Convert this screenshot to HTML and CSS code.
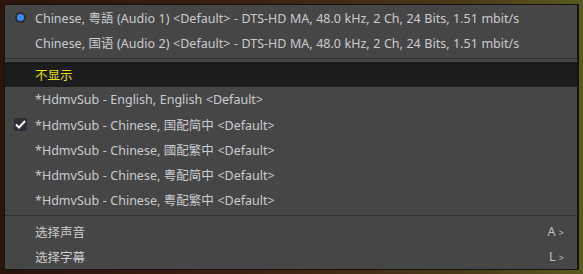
FILE: index.html
```html
<!doctype html>
<html>
  <head>
    <title>Track Menu</title>
    <link rel="stylesheet" href="styles.css">
  </head>
  <body>
    <div class="menu">
      <div class="item">
        <span class="mark"><span class="radio"></span></span>
        <span class="label">Chinese, 粤語 (Audio 1) &lt;Default&gt; - DTS-HD MA, 48.0 kHz, 2 Ch, 24 Bits, 1.51 mbit/s</span>
      </div>
      <div class="item">
        <span class="mark"></span>
        <span class="label">Chinese, 国语 (Audio 2) &lt;Default&gt; - DTS-HD MA, 48.0 kHz, 2 Ch, 24 Bits, 1.51 mbit/s</span>
      </div>
      <div class="sep"></div>
      <div class="item item_hover">
        <span class="mark"></span>
        <span class="label">不显示</span>
      </div>
      <div class="item">
        <span class="mark"></span>
        <span class="label">*HdmvSub - English, English &lt;Default&gt;</span>
      </div>
      <div class="item">
        <span class="mark">
          <span class="check">
            <svg width="11" height="9" viewBox="0 0 11 9">
              <path d="M1 4.5 L4 7.5 L10 1" fill="none" stroke="#fff" stroke-width="2"/>
            </svg>
          </span>
        </span>
        <span class="label">*HdmvSub - Chinese, 国配简中 &lt;Default&gt;</span>
      </div>
      <div class="item">
        <span class="mark"></span>
        <span class="label">*HdmvSub - Chinese, 國配繁中 &lt;Default&gt;</span>
      </div>
      <div class="item">
        <span class="mark"></span>
        <span class="label">*HdmvSub - Chinese, 粤配简中 &lt;Default&gt;</span>
      </div>
      <div class="item">
        <span class="mark"></span>
        <span class="label">*HdmvSub - Chinese, 粤配繁中 &lt;Default&gt;</span>
      </div>
      <div class="sep"></div>
      <div class="item">
        <span class="mark"></span>
        <span class="label">选择声音</span>
        <span class="key">A <small>&gt;</small></span>
      </div>
      <div class="item">
        <span class="mark"></span>
        <span class="label">选择字幕</span>
        <span class="key">L <small>&gt;</small></span>
      </div>
    </div>
  </body>
</html>
```

FILE: styles.css
```css
body {
  margin: 0;
  width: 583px;
  height: 274px;
  overflow: hidden;
  background: linear-gradient(90deg, #2a140c 0%, #3b1f12 40%, #4a3a18 80%, #5a5a20 100%);
  font-family: "Noto Sans", "Noto Sans CJK SC", sans-serif;
  font-size: 12.5px;
  color: #c9ccd0;
}

.menu {
  margin: 4px 0 0 4px;
  width: 572px;
  height: 264px;
  background-color: #464646;
  border: 1px solid #141414;
  border-right-width: 2px;
  border-bottom-width: 1px;
  display: flex;
  flex-direction: column;
}

.item {
  height: 25px;
  display: flex;
  align-items: center;
  padding-right: 13px;
}

.item_hover {
  background-color: #1c1c1c;
}

.item_hover .label {
  color: #e5e00a;
}

.mark {
  width: 30px;
  display: flex;
  justify-content: center;
  align-items: center;
  flex-shrink: 0;
}

.radio {
  width: 11px;
  height: 11px;
  border-radius: 50%;
  background-color: #2c2c36;
  display: flex;
  justify-content: center;
  align-items: center;
}

.radio::after {
  content: "";
  width: 7px;
  height: 7px;
  border-radius: 50%;
  background-color: #3a8ef0;
}

.check {
  width: 13px;
  height: 13px;
  border-radius: 2px;
  background-color: #2e2e38;
  display: flex;
  justify-content: center;
  align-items: center;
}

.label {
  flex: 1;
  white-space: nowrap;
  word-spacing: 0.3px;
}

.key {
  color: #b9c2cc;
}

.key small {
  font-size: 9px;
}

.sep {
  height: 7px;
  display: flex;
  align-items: center;
}

.sep::after {
  content: "";
  flex: 1;
  height: 1px;
  background-color: #30303a;
}
```
